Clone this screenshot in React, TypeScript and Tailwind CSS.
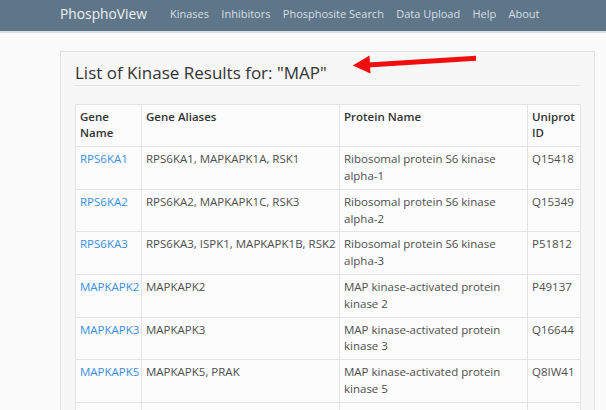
import React from "react";

type Kinase = {
  gene: string;
  aliases: string;
  protein: string;
  uniprot: string;
};

const kinases: Kinase[] = [
  { gene: "RPS6KA1", aliases: "RPS6KA1, MAPKAPK1A, RSK1", protein: "Ribosomal protein S6 kinase alpha-1", uniprot: "Q15418" },
  { gene: "RPS6KA2", aliases: "RPS6KA2, MAPKAPK1C, RSK3", protein: "Ribosomal protein S6 kinase alpha-2", uniprot: "Q15349" },
  { gene: "RPS6KA3", aliases: "RPS6KA3, ISPK1, MAPKAPK1B, RSK2", protein: "Ribosomal protein S6 kinase alpha-3", uniprot: "P51812" },
  { gene: "MAPKAPK2", aliases: "MAPKAPK2", protein: "MAP kinase-activated protein kinase 2", uniprot: "P49137" },
  { gene: "MAPKAPK3", aliases: "MAPKAPK3", protein: "MAP kinase-activated protein kinase 3", uniprot: "Q16644" },
  { gene: "MAPKAPK5", aliases: "MAPKAPK5, PRAK", protein: "MAP kinase-activated protein kinase 5", uniprot: "Q8IW41" },
  { gene: "MAPK1", aliases: "MAPK1, ERK2, PRKM1", protein: "Mitogen-activated protein kinase 1", uniprot: "P28482" },
];

const navLinks = ["Kinases", "Inhibitors", "Phosphosite Search", "Data Upload", "Help", "About"];

const celda = "border border-[#e4e4e4] px-[4px] py-[4px] align-top";

const App: React.FC = () => {
  return (
    <div className="relative w-[606px] h-[410px] overflow-hidden bg-[#fbfbfb] font-['Open_Sans',sans-serif]">
      {/* barra de navegación */}
      <div className="h-[33px] bg-[#5f7689] border-b-2 border-[#d9dee2] flex items-center pl-[60px]">
        <span className="text-[13.8px] text-[#eef1f3] mr-[23px] -mt-[3px]">PhosphoView</span>
        <div className="flex gap-[12.3px] -mt-[3px]">
          {navLinks.map((l) => (
            <span key={l} className="text-[11px] text-[#d6dee4]">
              {l}
            </span>
          ))}
        </div>
      </div>

      {/* tarjeta de resultados */}
      <div className="ml-[60px] mt-[18px] w-[535px] bg-[#f7f7f7] border border-[#e2e2e2] px-[14px] pt-[12px] pb-4">
        <h3 className="text-[17px] leading-[1.1] text-[#333] pb-[2px] border-b border-[#e2e2e2]">
          List of Kinase Results for: "MAP"
        </h3>

        <table className="mt-[18px] w-[505px] table-fixed border-collapse bg-[#fcfcfc] text-[11.5px] leading-[16.8px] text-[#4f4f4f]">
          <colgroup>
            <col className="w-[66px]" />
            <col className="w-[198px]" />
            <col className="w-[188px]" />
            <col className="w-[53px]" />
          </colgroup>
          <thead>
            <tr className="text-left text-[#333]">
              <th className={celda + " font-semibold"}>Gene Name</th>
              <th className={celda + " font-semibold"}>Gene Aliases</th>
              <th className={celda + " font-semibold"}>Protein Name</th>
              <th className={celda + " font-semibold"}>Uniprot ID</th>
            </tr>
          </thead>
          <tbody>
            {kinases.map((k) => (
              <tr key={k.gene}>
                <td className={celda + " whitespace-nowrap"}>
                  <a className="text-[#3d8ee5]">{k.gene}</a>
                </td>
                <td className={celda + " whitespace-nowrap"}>{k.aliases}</td>
                <td className={celda}>{k.protein}</td>
                <td className={celda}>{k.uniprot}</td>
              </tr>
            ))}
          </tbody>
        </table>
      </div>

      {/* flecha roja */}
      <svg className="absolute left-0 top-0 pointer-events-none" width="606" height="410">
        <polygon points="368,62.5 476,55.8 476,60.8 368,67.5" fill="#f20d0d" />
        <polygon points="352.7,65.5 369.5,55.5 370.5,73.5" fill="#f20d0d" />
      </svg>
    </div>
  );
};

export default App;
